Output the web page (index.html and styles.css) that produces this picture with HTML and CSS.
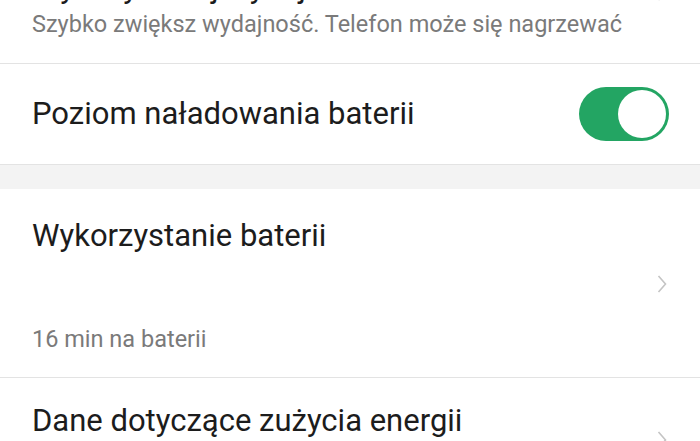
FILE: index.html
```html
<!DOCTYPE html>
<html lang="pl">
<head>
    <meta charset="UTF-8">
    <title>Bateria</title>
    <link rel="stylesheet" href="styles.css">
</head>
<body>

<div class="list first">
    <div class="item item-mode">
        <div class="text">
            <div class="title">Tryb wysokiej wydajności</div>
            <div class="subtitle">Szybko zwiększ wydajność. Telefon może się nagrzewać</div>
        </div>
        <svg class="chevron up" width="10" height="18" viewBox="0 0 10 18"><polyline points="1.5,1 8.5,9 1.5,17" fill="none" stroke="#c4c4c4" stroke-width="1.6"/></svg>
    </div>
    <div class="item item-level">
        <div class="text">
            <div class="title">Poziom naładowania baterii</div>
        </div>
        <div class="switch on"><span class="knob"></span></div>
    </div>
</div>

<div class="gap"></div>

<div class="list">
    <div class="item item-usage">
        <div class="title">Wykorzystanie baterii</div>
        <div class="usage-arrow">
            <svg class="chevron" width="10" height="18" viewBox="0 0 10 18"><polyline points="1.5,1 8.5,9 1.5,17" fill="none" stroke="#c4c4c4" stroke-width="1.6"/></svg>
        </div>
        <div class="subtitle">16 min na baterii</div>
    </div>
    <div class="item item-data">
        <div class="text">
            <div class="title">Dane dotyczące zużycia energii</div>
        </div>
        <svg class="chevron low" width="10" height="18" viewBox="0 0 10 18"><polyline points="1.5,1 8.5,9 1.5,17" fill="none" stroke="#c4c4c4" stroke-width="1.6"/></svg>
    </div>
</div>

</body>
</html>
```

FILE: styles.css
```css
body {
    margin: 0;
    background: #fff;
    font-family: Roboto, "Noto Sans", sans-serif;
    overflow: hidden;
    height: 441px;
}
.list {
    background: #fff;
}
.first {
    margin-top: -30px;
}
.item {
    display: flex;
    align-items: center;
    padding: 0 32px;
    border-bottom: 1px solid #e3e3e3;
    box-sizing: border-box;
}
.text {
    flex: 1;
}
.title {
    font-size: 31px;
    line-height: 36px;
    color: #1c1c1c;
}
.subtitle {
    font-size: 23.5px;
    line-height: 28px;
    color: #7a7a7a;
}
.item-mode {
    height: 94px;
    padding-bottom: 25px;
}
.item-mode .subtitle {
    margin-top: 4px;
}
.item-level {
    height: 101px;
}
.gap {
    height: 24px;
    background: #f3f3f3;
}
.item-usage {
    height: 189px;
    flex-direction: column;
    align-items: stretch;
    padding-top: 29px;
}
.usage-arrow {
    display: flex;
    justify-content: flex-end;
    align-items: center;
    height: 48px;
    margin-top: 6px;
    margin-bottom: 17px;
}
.item-data {
    height: 90px;
    align-items: flex-start;
    padding-top: 25px;
    border-bottom: none;
}
.chevron {
    display: block;
    margin-right: 1px;
}
.chevron.up {
    margin-bottom: 24px;
}
.chevron.low {
    margin-top: 28px;
}
.switch {
    width: 90px;
    height: 54px;
    border-radius: 27px;
    background: #23a563;
    display: flex;
    align-items: center;
    justify-content: flex-end;
    padding: 0 3px;
    box-sizing: border-box;
    margin-right: -1px;
}
.knob {
    width: 48px;
    height: 48px;
    border-radius: 50%;
    background: #fff;
}
```
